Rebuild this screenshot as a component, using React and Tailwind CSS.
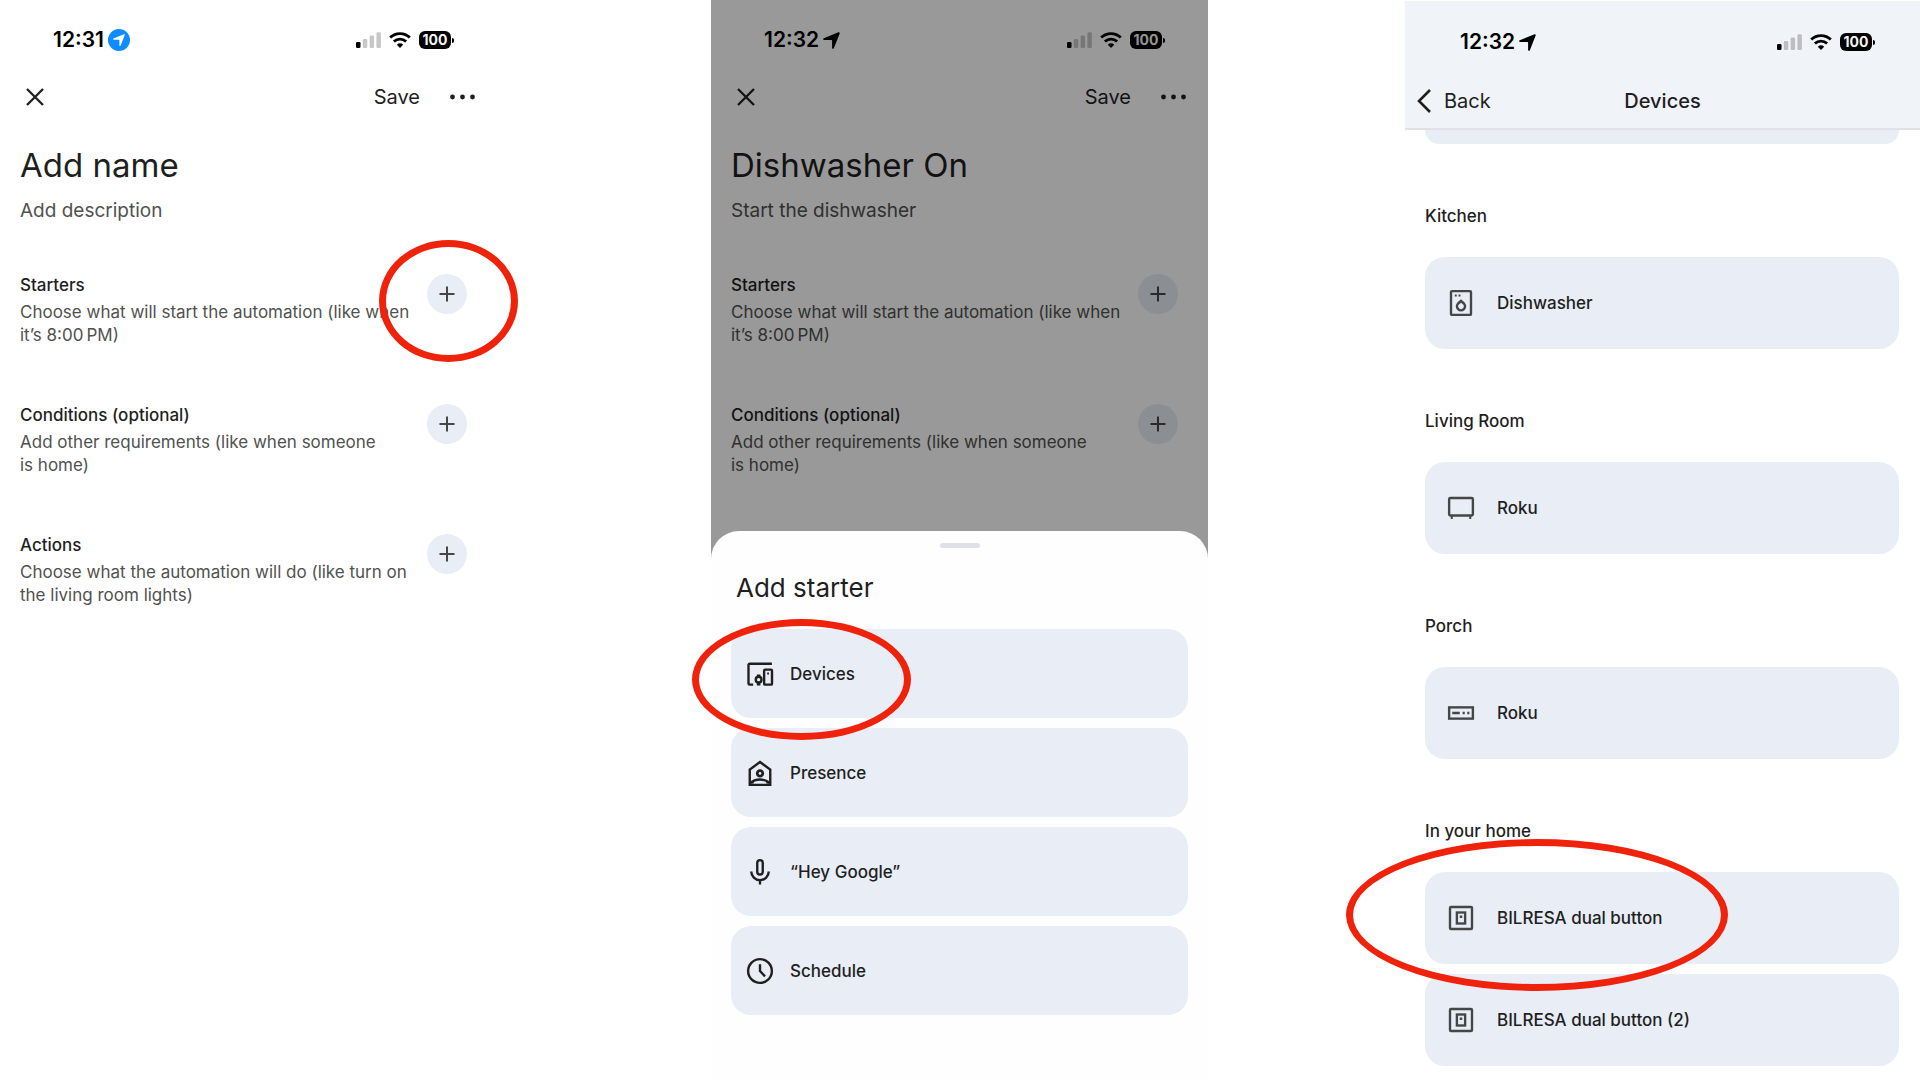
import React from "react";

function LocationArrow({ className }) {
  return (
    <svg viewBox="0 0 16 16" className={className} fill="currentColor" aria-hidden="true">
      <path d="M14.6.3a.85.85 0 0 1 1.1 1.100L10.200 15.300a.85.85 0 0 1-1.650-.3V8.200a.7.7 0 0 0-.7-.7H1a.85.85 0 0 1-.3-1.650z" />
    </svg>
  );
}

function SignalIcon() {
  return (
    <svg viewBox="0 0 25 16" className="h-4 w-[25px]" aria-hidden="true">
      <rect x="0" y="10" width="4.500" height="6" rx="1.300" fill="#000" />
      <rect x="6.800" y="7" width="4.500" height="9" rx="1.300" fill="#000" opacity="0.22" />
      <rect x="13.600" y="3.600" width="4.500" height="12.400" rx="1.300" fill="#000" opacity="0.22" />
      <rect x="20.400" y="0.300" width="4.500" height="15.700" rx="1.300" fill="#000" opacity="0.22" />
    </svg>
  );
}

function WifiIcon() {
  return (
    <svg viewBox="0 0 22 16" className="h-4 w-[22px]" fill="none" stroke="#000" strokeWidth="2.800" aria-hidden="true">
      <path d="M1.200 5.600a14 14 0 0 1 19.600 0" />
      <path d="M4.900 9.500a8.800 8.800 0 0 1 12.200 0" />
      <path d="M11 16l-3.200-3.300a4.700 4.700 0 0 1 6.400 0z" fill="#000" stroke="none" />
    </svg>
  );
}

function StatusBar({ time, live }) {
  return (
    <div className="flex h-6 items-center justify-between pr-[43px] pl-[53px] text-black">
      <div className="flex items-center gap-1">
        <span className="text-[21px] leading-6 font-semibold">{time}</span>
        {live ? (
          <span className="flex size-[22px] items-center justify-center rounded-full bg-[#108cff] text-white">
            <LocationArrow className="size-3" />
          </span>
        ) : (
          <LocationArrow className="size-[17px]" />
        )}
      </div>
      <div className="flex items-center gap-2">
        <SignalIcon />
        <WifiIcon />
        <span className="flex items-center gap-px">
          <span className="flex h-[18px] w-8 items-center justify-center rounded-md bg-black text-[14px] leading-none font-bold text-[#f5f5f5]">
            100
          </span>
          <span className="h-[5px] w-0.5 rounded-r-full bg-black" />
        </span>
      </div>
    </div>
  );
}

function Ring({ className }) {
  return (
    <span
      aria-hidden="true"
      className={`pointer-events-none absolute z-20 rounded-[50%] border-[7px] border-[#ef230c] ${className}`}
    />
  );
}

function Section({ title, text, ringed }) {
  return (
    <section className="flex items-start justify-between">
      <div className="w-[400px]">
        <h2 className="text-[17px] leading-6 font-medium text-[#1f1f1f]">{title}</h2>
        <p className="mt-1 text-[17px] leading-[23px] text-[#50524f]">
          {text[0]}
          <br />
          {text[1]}
        </p>
      </div>
      <div className="relative mt-px mr-[10px]">
        <button
          type="button"
          aria-label={`Add ${title}`}
          className="flex size-10 items-center justify-center rounded-full bg-[#e8edf6]"
        >
          <svg viewBox="0 0 16 16" className="size-4 stroke-[#444746]" strokeWidth="2" aria-hidden="true">
            <path d="M8 .5v15M.5 8h15" />
          </svg>
        </button>
        {ringed && <Ring className="-top-[34px] -left-12 h-[122px] w-[139px]" />}
      </div>
    </section>
  );
}

function Editor({ time, live, title, description, sections }) {
  return (
    <div className="pt-7">
      <StatusBar time={time} live={live} />
      <div className="mt-[27px] flex h-9 items-center justify-between pr-[22px] pl-[26px] text-[#1f1f1f]">
        <button type="button" aria-label="Close">
          <svg viewBox="0 0 18 18" className="size-[18px]" stroke="currentColor" strokeWidth="2.300" aria-hidden="true">
            <path d="M1 1l16 16M17 1L1 17" />
          </svg>
        </button>
        <div className="flex items-center gap-[30px]">
          <button type="button" className="text-[20px] leading-6">
            Save
          </button>
          <button type="button" aria-label="More options">
            <svg viewBox="0 0 25 6" className="h-1.5 w-[25px]" fill="currentColor" aria-hidden="true">
              <circle cx="2.500" cy="3" r="2.400" />
              <circle cx="12.500" cy="3" r="2.400" />
              <circle cx="22.500" cy="3" r="2.400" />
            </svg>
          </button>
        </div>
      </div>
      <div className="px-5">
        <h1 className="mt-[30px] text-[33px] leading-10 text-[#1f1f1f]">{title}</h1>
        <p className="mt-[14px] text-[19px] leading-6 text-[#50524f]">{description}</p>
        <div className="mt-[50px] flex flex-col gap-14">
          {sections.map((s) => (
            <Section key={s.title} {...s} />
          ))}
        </div>
      </div>
    </div>
  );
}

const starters = {
  title: "Starters",
  text: ["Choose what will start the automation (like when", "it’s 8:00\u2009PM)"],
};
const conditions = {
  title: "Conditions (optional)",
  text: ["Add other requirements (like when someone", "is home)"],
};
const actions = {
  title: "Actions",
  text: ["Choose what the automation will do (like turn on", "the living room lights)"],
};

const icons = {
  devices: (
    <>
      <path d="M6.500 20.500H3.800a1 1 0 0 1-1-1V4.800a1 1 0 0 1 1-1H21.500" />
      <rect x="15.300" y="8.500" width="6.300" height="12" rx="0.800" />
      <circle cx="10.900" cy="16.500" r="2.300" />
      <path d="M10.900 12.300v2M10.900 18.800v2.300" strokeWidth="2.800" />
      <path d="M18.450 10.800v1.500" strokeWidth="1.400" />
    </>
  ),
  presence: (
    <>
      <path d="M3.800 21.500V9.300L12 3.200l8.200 6.100V21.500z" />
      <circle cx="12" cy="12.300" r="2.200" strokeWidth="2.200" />
      <path d="M4.500 20c3.500-3.700 11.500-3.700 15 0" />
      <path d="M4 19.300l3-.6v1.800H4zM20 19.300l-3-.6v1.800h3z" fill="currentColor" stroke="none" />
    </>
  ),
  mic: (
    <>
      <rect x="9.800" y="2.500" width="4.400" height="11.500" rx="2.200" />
      <path d="M5 11.500a7 7 0 0 0 14 0M12 18.500V22" />
    </>
  ),
  clock: (
    <>
      <circle cx="12" cy="12" r="9.500" />
      <path d="M12 6.500V12l4 4.300" />
    </>
  ),
  dishwasher: (
    <>
      <rect x="4" y="2.500" width="16" height="19" rx="0.800" />
      <path d="M12 10.400l2.300 2a3.200 3.200 0 1 1-4.600 0z" strokeWidth="2" />
      <path d="M7 6h1.600M10 6h1.600" strokeWidth="1.600" />
    </>
  ),
  tv: (
    <>
      <rect x="2.500" y="4" width="19" height="14" rx="1" />
      <path d="M4.600 18v2.800M19.400 18v2.800" strokeWidth="1.600" />
    </>
  ),
  streamer: (
    <>
      <rect x="2.500" y="7.500" width="19" height="9" />
      <path d="M5 12h6M13.300 12h1.700M17 12h1.700" />
    </>
  ),
  wallSwitch: (
    <>
      <rect x="3.200" y="3.200" width="17.600" height="17.600" rx="0.800" />
      <rect x="8.700" y="7.600" width="6.600" height="8.800" />
      <path d="M12 10v2" strokeWidth="2" />
    </>
  ),
};

function Icon({ name, className }) {
  return (
    <svg
      viewBox="0 0 24 24"
      className={`size-[30px] shrink-0 ${className}`}
      fill="none"
      stroke="currentColor"
      strokeWidth="1.900"
      aria-hidden="true"
    >
      {icons[name]}
    </svg>
  );
}

const starterOptions = [
  { icon: "devices", label: "Devices", ringed: true },
  { icon: "presence", label: "Presence" },
  { icon: "mic", label: "“Hey Google”" },
  { icon: "clock", label: "Schedule" },
];

function StarterSheet() {
  return (
    <div className="absolute inset-x-0 bottom-0 rounded-t-[28px] bg-[#fefefe] px-5 pt-3 pb-[65px]">
      <div className="mx-auto h-[5px] w-10 rounded-full bg-[#e0e1e8]" />
      <h2 className="mt-6 ml-[5px] text-[26px] leading-8 text-[#1f1f1f]">Add starter</h2>
      <ul className="mt-[25px] flex flex-col gap-[10px]">
        {starterOptions.map((o) => (
          <li key={o.label} className="relative">
            <button
              type="button"
              className="flex h-[89px] w-full items-center gap-[15px] rounded-[20px] bg-[#e8edf6] pl-[14px] text-left text-[17px] leading-6 font-medium text-[#1f1f1f]"
            >
              <Icon name={o.icon} className="text-[#1f1f1f]" />
              {o.label}
            </button>
            {o.ringed && <Ring className="-top-[10px] -left-[39px] h-[121px] w-[219px]" />}
          </li>
        ))}
      </ul>
    </div>
  );
}

const rooms = [
  { name: "Kitchen", devices: [{ icon: "dishwasher", label: "Dishwasher" }] },
  { name: "Living Room", devices: [{ icon: "tv", label: "Roku" }] },
  { name: "Porch", devices: [{ icon: "streamer", label: "Roku" }] },
  {
    name: "In your home",
    devices: [
      { icon: "wallSwitch", label: "BILRESA dual button", ringed: true },
      { icon: "wallSwitch", label: "BILRESA dual button (2)" },
    ],
  },
];

function DeviceList() {
  return (
    <>
      <header className="mt-px border-b-2 border-[#dfe1e6] bg-[#f0f3f8] pt-[29px]">
        <div className="px-0.5">
          <StatusBar time="12:32" />
        </div>
        <div className="mt-6 grid h-[50px] grid-cols-[1fr_auto_1fr] items-center pb-1 text-[#1f1f1f]">
          <button type="button" className="flex items-center gap-[13px] pl-3 text-[20px] leading-6">
            <svg viewBox="0 0 14 24" className="h-6 w-[14px]" fill="none" stroke="currentColor" strokeWidth="2.600" aria-hidden="true">
              <path d="M13 1L2 12l11 11" />
            </svg>
            Back
          </button>
          <h1 className="text-[20px] leading-6 font-medium">Devices</h1>
        </div>
      </header>
      <main className="pr-[21px] pb-[14px] pl-5">
        <div className="h-[14px] rounded-b-[20px] bg-[#e8edf6]" />
        {rooms.map((room) => (
          <section key={room.name} className="mt-[60px]">
            <h2 className="text-[17px] leading-6 font-medium text-[#1f1f1f]">{room.name}</h2>
            <ul className="mt-[29px] flex flex-col gap-[10px]">
              {room.devices.map((d) => (
                <li key={d.label} className="relative">
                  <button
                    type="button"
                    className="flex h-[92px] w-full items-center gap-[21px] rounded-[20px] bg-[#e8edf6] pl-[21px] text-left text-[17px] leading-6 font-medium text-[#1f1f1f]"
                  >
                    <Icon name={d.icon} className="text-[#444746]" />
                    {d.label}
                  </button>
                  {d.ringed && <Ring className="-top-[33px] -left-[79px] h-[152px] w-[382px]" />}
                </li>
              ))}
            </ul>
          </section>
        ))}
      </main>
    </>
  );
}

export default function App() {
  return (
    <div className="grid min-h-screen grid-cols-[497fr_214fr_497fr_197fr_515fr] bg-white font-['Inter',sans-serif]">
      <div className="col-start-1">
        <Editor
          time="12:31"
          live
          title="Add name"
          description="Add description"
          sections={[{ ...starters, ringed: true }, conditions, actions]}
        />
      </div>
      <div className="relative col-start-3">
        <Editor
          time="12:32"
          title="Dishwasher On"
          description="Start the dishwasher"
          sections={[starters, conditions]}
        />
        <div className="absolute inset-x-0 top-0 bottom-[500px] bg-black/40" />
        <StarterSheet />
      </div>
      <div className="col-start-5">
        <DeviceList />
      </div>
    </div>
  );
}
